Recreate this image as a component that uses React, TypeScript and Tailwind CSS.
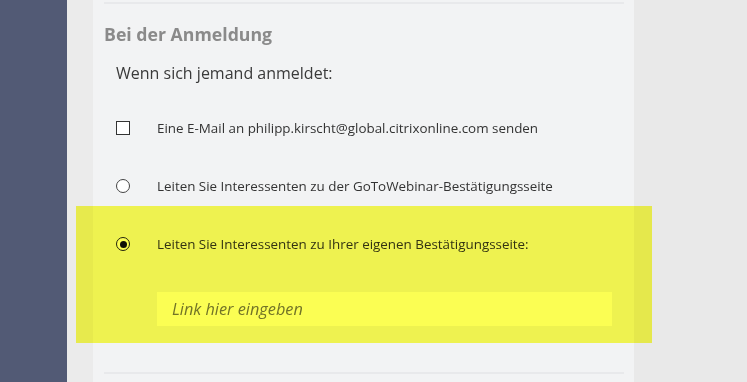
import React from "react";

export default function App() {
  const font = { fontFamily: '"Open Sans", "Noto Sans", sans-serif' };
  return (
    <div className="relative flex h-[382px] w-[747px] overflow-hidden" style={font}>
      <div className="w-[67px] shrink-0 bg-[#525a75]" />
      <div className="w-[26px] shrink-0 bg-[#ebebeb]" />
      <div className="flex w-[541px] shrink-0 flex-col bg-[#f2f3f4] pl-[11px] pr-[10px]">
        <div className="mt-[2px] h-[2px] bg-[#e8e9eb]" />
        <div className="mt-[17px] flex h-[26px] items-center text-[17.7px] font-bold text-[#8a8a8a]">
          Bei der Anmeldung
        </div>
        <div className="mt-[14px] flex h-[24px] items-center pl-[12px] text-[16px] text-[#3a3a3a]">
          Wenn sich jemand anmeldet:
        </div>
        <div className="mt-[31px] flex h-[24px] items-center pl-[12px] text-[13.4px] text-[#333]">
          <span className="box-border h-[14px] w-[14px] border border-[#333] bg-white" />
          <span className="ml-[27px]">Eine E-Mail an philipp.kirscht@global.citrixonline.com senden</span>
        </div>
        <div className="mt-[34px] flex h-[24px] items-center pl-[12px] text-[13.4px] text-[#333]">
          <span className="box-border h-[14px] w-[14px] rounded-full border border-[#444] bg-white" />
          <span className="ml-[27px]">Leiten Sie Interessenten zu der GoToWebinar-Bestätigungsseite</span>
        </div>
        <div className="mt-[34px] flex h-[24px] items-center pl-[12px] text-[13.4px] text-[#333]">
          <span className="box-border flex h-[14px] w-[14px] items-center justify-center rounded-full border border-[#222] bg-white">
            <span className="h-[7px] w-[7px] rounded-full bg-[#111]" />
          </span>
          <span className="ml-[27px]">Leiten Sie Interessenten zu Ihrer eigenen Bestätigungsseite:</span>
        </div>
        <div className="mt-[36px] ml-[53px] flex h-[34px] w-[455px] items-center bg-white pl-[15px] text-[16.3px] italic text-[#747474]">
          Link hier eingeben
        </div>
        <div className="mt-[46px] h-[2px] bg-[#e8e9eb]" />
      </div>
      <div className="flex-1 bg-[#e9e9e9]" />
      <div className="pointer-events-none absolute left-[76px] top-[206px] h-[137px] w-[576px] bg-[#fbfe53] mix-blend-multiply" />
    </div>
  );
}
